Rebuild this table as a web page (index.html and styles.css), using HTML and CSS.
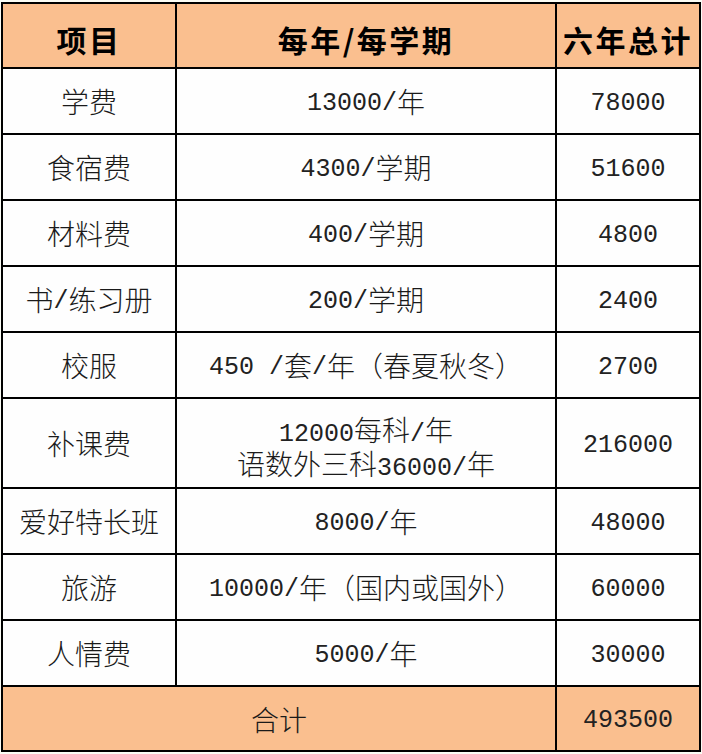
FILE: index.html
```html
<!DOCTYPE html>
<html lang="zh-CN">
<head>
<meta charset="utf-8">
<title>费用表</title>
<link rel="stylesheet" href="styles.css">
</head>
<body>
<div class="sheet">
  <div class="cell head">项目</div>
  <div class="cell head">每年/每学期</div>
  <div class="cell head">六年总计</div>

  <div class="cell">学费</div>
  <div class="cell"><span class="n">13000/</span>年</div>
  <div class="cell"><span class="n">78000</span></div>

  <div class="cell">食宿费</div>
  <div class="cell"><span class="n">4300/</span>学期</div>
  <div class="cell"><span class="n">51600</span></div>

  <div class="cell">材料费</div>
  <div class="cell"><span class="n">400/</span>学期</div>
  <div class="cell"><span class="n">4800</span></div>

  <div class="cell">书<span class="n">/</span>练习册</div>
  <div class="cell"><span class="n">200/</span>学期</div>
  <div class="cell"><span class="n">2400</span></div>

  <div class="cell">校服</div>
  <div class="cell"><span class="n">450&nbsp;/</span>套<span class="n">/</span>年（春夏秋冬）</div>
  <div class="cell"><span class="n">2700</span></div>

  <div class="cell">补课费</div>
  <div class="cell two"><span class="n">12000</span>每科<span class="n">/</span>年<br>语数外三科<span class="n">36000/</span>年</div>
  <div class="cell"><span class="n">216000</span></div>

  <div class="cell">爱好特长班</div>
  <div class="cell"><span class="n">8000/</span>年</div>
  <div class="cell"><span class="n">48000</span></div>

  <div class="cell">旅游</div>
  <div class="cell"><span class="n">10000/</span>年（国内或国外）</div>
  <div class="cell"><span class="n">60000</span></div>

  <div class="cell">人情费</div>
  <div class="cell"><span class="n">5000/</span>年</div>
  <div class="cell"><span class="n">30000</span></div>

  <div class="cell foot span2">合计</div>
  <div class="cell foot"><span class="n">493500</span></div>
</div>
</body>
</html>
```

FILE: styles.css
```css
html, body {
  margin: 0;
  padding: 0;
  background: #fafcf5;
}

body {
  padding: 2px 0 0 1px;
}

.sheet {
  display: grid;
  grid-template-columns: 172px 378px 142px;
  grid-template-rows: 63px 64px 64px 64px 64px 64px 88px 64px 64px 64px 63px;
  gap: 2px;
  padding: 2px;
  width: 696px;
  background: #000;
  font-family: "Noto Sans CJK SC", "Noto Sans", sans-serif;
  font-size: 28px;
  font-weight: 300;
  color: #1a1a1a;
}

.cell {
  background: #fefefe;
  display: flex;
  align-items: center;
  justify-content: center;
  text-align: center;
  white-space: nowrap;
  line-height: 1;
}

.two {
  display: block;
  line-height: 28px;
  padding-top: 16px;
  box-sizing: border-box;
}

.n {
  font-family: "Liberation Mono", "DejaVu Sans Mono", monospace;
  font-size: 25px;
  font-weight: 400;
  color: #222;
  padding-top: 4px;
}

.head {
  background: #fabf8f;
  font-weight: 700;
  font-size: 30px;
  letter-spacing: 2.5px;
  color: #000;
  padding-top: 6px;
}

.foot {
  background: #fabf8f;
}

.span2 {
  grid-column: span 2;
}
```
